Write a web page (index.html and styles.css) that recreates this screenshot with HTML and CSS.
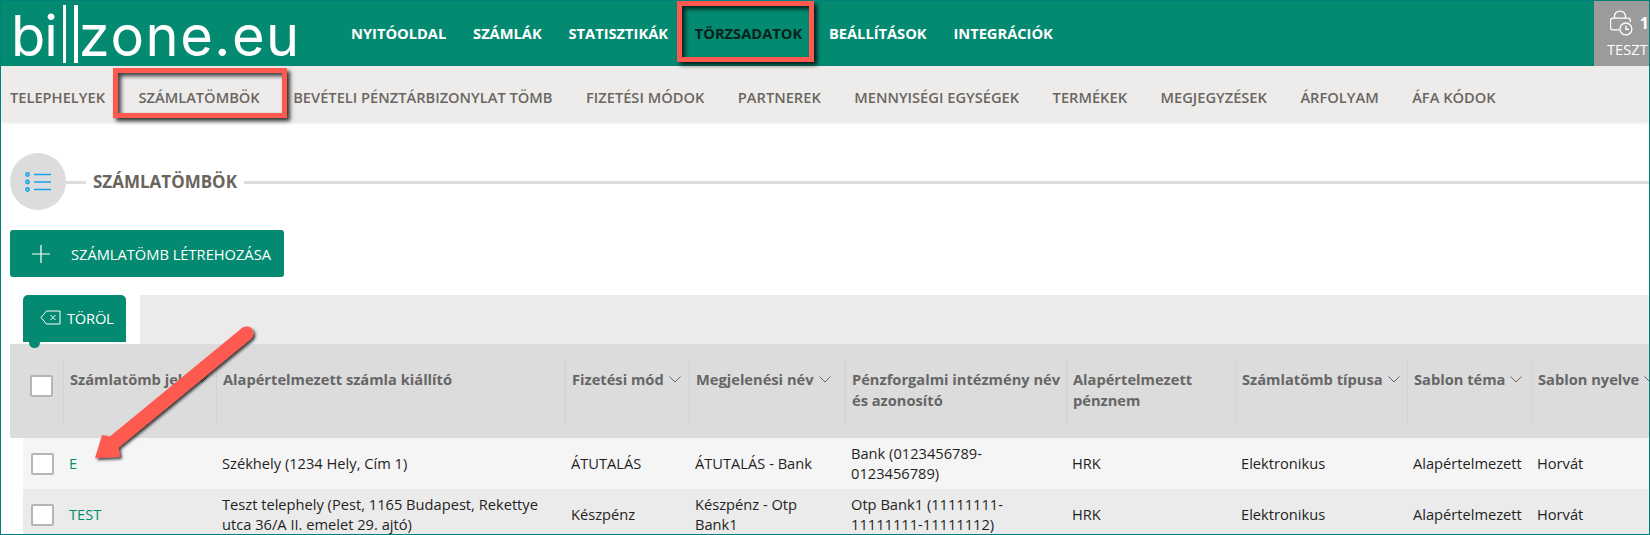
FILE: index.html
```html
<!DOCTYPE html>
<html lang="hu">
<head>
<meta charset="utf-8">
<title>Számlatömbök</title>
<link rel="stylesheet" href="styles.css">
</head>
<body>
<div class="frame">
  <header class="topbar">
    <div class="logo"><span class="logo-a">bi</span><i class="bars"></i><span class="logo-b">zone.eu</span></div>
    <nav class="mainnav">
      <a>NYITÓOLDAL</a><a>SZÁMLÁK</a><a>STATISZTIKÁK</a><a class="dark">TÖRZSADATOK</a><a>BEÁLLÍTÁSOK</a><a>INTEGRÁCIÓK</a>
    </nav>
    <div class="session">
      <div class="session-top">
        <svg width="24" height="26" viewBox="0 0 24 26" fill="none" stroke="#fff" stroke-width="1.300"><path d="M4.500 8V6a5.500 5 0 0 1 11 0v2"/><path d="M9.500 20H3a2.500 2.500 0 0 1-2.500-2.500v-7A2.500 2.500 0 0 1 3 8h15a2.500 2.500 0 0 1 2.500 2.500V12"/><circle cx="16" cy="19" r="6"/><path d="M16 15.500v3.800h3"/></svg>
        <b>1</b>
      </div>
      <div class="session-name">TESZT</div>
    </div>
  </header>
  <nav class="subnav">
    <a>TELEPHELYEK</a><a>SZÁMLATÖMBÖK</a><a>BEVÉTELI PÉNZTÁRBIZONYLAT TÖMB</a><a>FIZETÉSI MÓDOK</a><a>PARTNEREK</a><a>MENNYISÉGI EGYSÉGEK</a><a>TERMÉKEK</a><a>MEGJEGYZÉSEK</a><a>ÁRFOLYAM</a><a>ÁFA KÓDOK</a>
  </nav>
  <main class="content">
    <div class="title-row">
      <div class="title-icon">
        <svg width="26" height="20" viewBox="0 0 26 20" fill="none" stroke="#1aa3ea" stroke-width="1.600"><circle cx="2.500" cy="2.500" r="1.600"/><circle cx="2.500" cy="10" r="1.600"/><circle cx="2.500" cy="17.500" r="1.600"/><path d="M9 2.500h17M9 10h17M9 17.500h17"/></svg>
      </div>
      <i class="rule short"></i>
      <h1>SZÁMLATÖMBÖK</h1>
      <i class="rule"></i>
    </div>
    <button class="create"><svg width="18" height="18" viewBox="0 0 18 18" stroke="#fff" stroke-width="1.200"><path d="M9 0v18M0 9h18"/></svg><span>SZÁMLATÖMB LÉTREHOZÁSA</span></button>
    <div class="tabs">
      <div class="del-tab">
        <svg width="21" height="15" viewBox="0 0 21 15" fill="none" stroke="#fff" stroke-width="1"><path d="M6.500 1H20v13H6.500L1 7.500z"/><path d="M10.500 5l5 5M15.500 5l-5 5"/></svg>
        <span>TÖRÖL</span>
        <i class="dot"></i>
      </div>
      <div class="tab-fill"></div>
    </div>
    <div class="thead">
      <div class="th-check"><i class="check"></i></div>
      <div class="th nowrap"><span>Számlatömb jele</span><svg class="chev" viewBox="0 0 12 7"><path d="M.5.500 6 6 11.500.500"/></svg></div>
      <div class="th"><span>Alapértelmezett számla kiállító</span></div>
      <div class="th nowrap"><span>Fizetési mód</span><svg class="chev" viewBox="0 0 12 7"><path d="M.5.500 6 6 11.500.500"/></svg></div>
      <div class="th nowrap"><span>Megjelenési név</span><svg class="chev" viewBox="0 0 12 7"><path d="M.5.500 6 6 11.500.500"/></svg></div>
      <div class="th"><span>Pénzforgalmi intézmény név és azonosító</span></div>
      <div class="th"><span>Alapértelmezett pénznem</span></div>
      <div class="th nowrap"><span>Számlatömb típusa</span><svg class="chev" viewBox="0 0 12 7"><path d="M.5.500 6 6 11.500.500"/></svg></div>
      <div class="th nowrap"><span>Sablon téma</span><svg class="chev" viewBox="0 0 12 7"><path d="M.5.500 6 6 11.500.500"/></svg></div>
      <div class="th nowrap"><span>Sablon nyelve</span><svg class="chev" viewBox="0 0 12 7"><path d="M.5.500 6 6 11.500.500"/></svg></div>
    </div>
    <div class="tr odd">
      <div class="td-check"><i class="check"></i></div>
      <div class="td"><a>E</a></div>
      <div class="td">Székhely (1234 Hely, Cím 1)</div>
      <div class="td">ÁTUTALÁS</div>
      <div class="td">ÁTUTALÁS - Bank</div>
      <div class="td">Bank (0123456789-<br>0123456789)</div>
      <div class="td">HRK</div>
      <div class="td">Elektronikus</div>
      <div class="td">Alapértelmezett</div>
      <div class="td">Horvát</div>
    </div>
    <div class="tr even">
      <div class="td-check"><i class="check"></i></div>
      <div class="td"><a>TEST</a></div>
      <div class="td">Teszt telephely (Pest, 1165 Budapest, Rekettye<br>utca 36/A II. emelet 29. ajtó)</div>
      <div class="td">Készpénz</div>
      <div class="td">Készpénz - Otp<br>Bank1</div>
      <div class="td">Otp Bank1 (11111111-<br>11111111-11111112)</div>
      <div class="td">HRK</div>
      <div class="td">Elektronikus</div>
      <div class="td">Alapértelmezett</div>
      <div class="td">Horvát</div>
    </div>
  </main>
  <i class="mark mark-sub"></i>
  <i class="mark mark-main"></i>
  <svg class="arrow" width="170" height="150" viewBox="0 0 170 150">
    <defs><filter id="sh" x="-20%" y="-20%" width="140%" height="140%"><feDropShadow dx="2" dy="2" stdDeviation="1.500" flood-color="#000" flood-opacity=".75"/></filter></defs>
    <path filter="url(#sh)" fill="#ff5a4f" d="M152.600 1.600A7 7 0 0 1 161.400 12.400L28.700 121.400 30 131 5 132 12 109 19.900 110.600z"/>
  </svg>
</div>
</body>
</html>
```
FILE: styles.css
```css
* { box-sizing: border-box; }
html, body { margin: 0; padding: 0; }
body { width: 1650px; height: 535px; overflow: hidden; background: #fff; font-family: "Open Sans", sans-serif; }
.frame { position: relative; width: 1650px; height: 535px; overflow: hidden; border: 1px solid #00807a; background: #fff; }

.topbar { display: flex; height: 65px; background: #048a71; }
.logo { display: flex; align-items: center; width: 350px; padding-left: 10px; color: #fff; font-family: Inter, sans-serif; font-weight: 400; font-size: 56px; line-height: 65px; white-space: nowrap; flex: none; }
.logo-a, .logo-b { position: relative; top: 3px; }
.logo-a { letter-spacing: -1px; }
.logo-b { letter-spacing: 1.500px; }
.bars { display: block; width: 15px; height: 58px; margin: 0 1px 0 6px; border-left: 3px solid #fff; border-right: 4px solid #fff; }
.mainnav { display: flex; align-items: center; gap: 26.800px; flex: 1; padding-bottom: 2px; color: #fff; font-size: 14.667px; font-weight: 700; }
.mainnav .dark { color: #07211c; }
.session { width: 55px; overflow: hidden; background: #9b9b9b; color: #fff; padding: 9px 0 0 14px; white-space: nowrap; }
.session-top { display: flex; align-items: center; gap: 6px; height: 26px; margin-left: 2px; }
.session-top b { font-size: 16px; color: #fff; }
.session-name { font-size: 14.667px; line-height: 20px; margin-top: 3px; margin-left: -1px; }

.subnav { display: flex; align-items: center; gap: 33.500px; height: 56px; padding: 5px 0 0 9px; background: #eeecea; color: #696662; font-size: 14.667px; font-weight: 600; box-shadow: 0 1px 3px rgba(0,0,0,.1); white-space: nowrap; }

.content { padding-left: 9px; }
.title-row { display: flex; align-items: center; height: 57px; margin-top: 31px; }
.title-icon { display: flex; align-items: center; justify-content: center; width: 56px; height: 57px; border-radius: 50%; background: #dcdcdc; flex: none; }
.rule { flex: 1; height: 3px; background: #dcdcdc; margin-top: 2px; }
.rule.short { flex: none; width: 20px; }
.title-row h1 { margin: 0 7px; font-size: 17px; font-weight: 700; color: #6a645c; white-space: nowrap; }

.create { display: flex; align-items: center; width: 274px; height: 47px; margin-top: 20px; padding: 0 0 0 22px; gap: 21px; border: 0; border-radius: 3px; background: #048a71; color: #fff; font-family: inherit; font-size: 14.667px; }

.tabs { display: flex; height: 49px; margin-top: 18px; padding-left: 13px; }
.del-tab { position: relative; display: flex; align-items: center; gap: 6px; width: 103px; height: 47px; padding: 0 0 2px 17px; border-radius: 5px 5px 0 0; background: #048a71; color: #fff; font-size: 14.667px; letter-spacing: -.2px; }
.dot { position: absolute; left: 6px; bottom: -6px; width: 11px; height: 11px; border-radius: 50%; background: #048a71; z-index: 1; }
.tab-fill { flex: 1; margin-left: 14px; background: #ebebeb; }

.thead, .tr { display: grid; }
.thead { grid-template-columns: 53px 153px 349px 124px 156px 221px 169px 172px 124px 130px; height: 94px; background: #dcdcdc; }
.tr { grid-template-columns: 40px 153px 349px 124px 156px 221px 169px 172px 124px 130px; margin-left: 13px; align-items: center; color: #1f1f1f; font-size: 14.667px; line-height: 20px; }
.th-check { padding: 31px 0 0 20px; }
.th { height: 67px; margin-top: 13px; padding: 12px 0 0 6px; border-left: 1px solid #d2d2d2; color: #666; font-size: 14.667px; font-weight: 700; line-height: 20.500px; }
.nowrap { white-space: nowrap; }
.chev { display: inline-block; width: 12px; height: 7px; margin: 0 0 2px 5px; fill: none; stroke: #666; stroke-width: 1; }
.check { display: block; width: 23px; height: 22px; background: #fff; border: 2px solid #b5b5b5; border-radius: 2px; }
.odd { height: 51px; padding-bottom: 2px; background: #f5f5f5; }
.even { height: 51px; padding-bottom: 2px; background: #ebebeb; }
.td-check { padding: 2px 0 0 8px; }
.td { padding-left: 6px; }
.td a { color: #048a71; }

.mark { position: absolute; border: 5px solid #ff5a4f; box-shadow: 3px 3px 4px rgba(0,0,0,.8), inset 3px 3px 4px rgba(0,0,0,.75); }
.mark-sub { left: 112px; top: 67px; width: 174px; height: 50px; }
.mark-main { left: 676px; top: 0; width: 137px; height: 61px; }
.arrow { position: absolute; left: 89px; top: 325px; }
```
